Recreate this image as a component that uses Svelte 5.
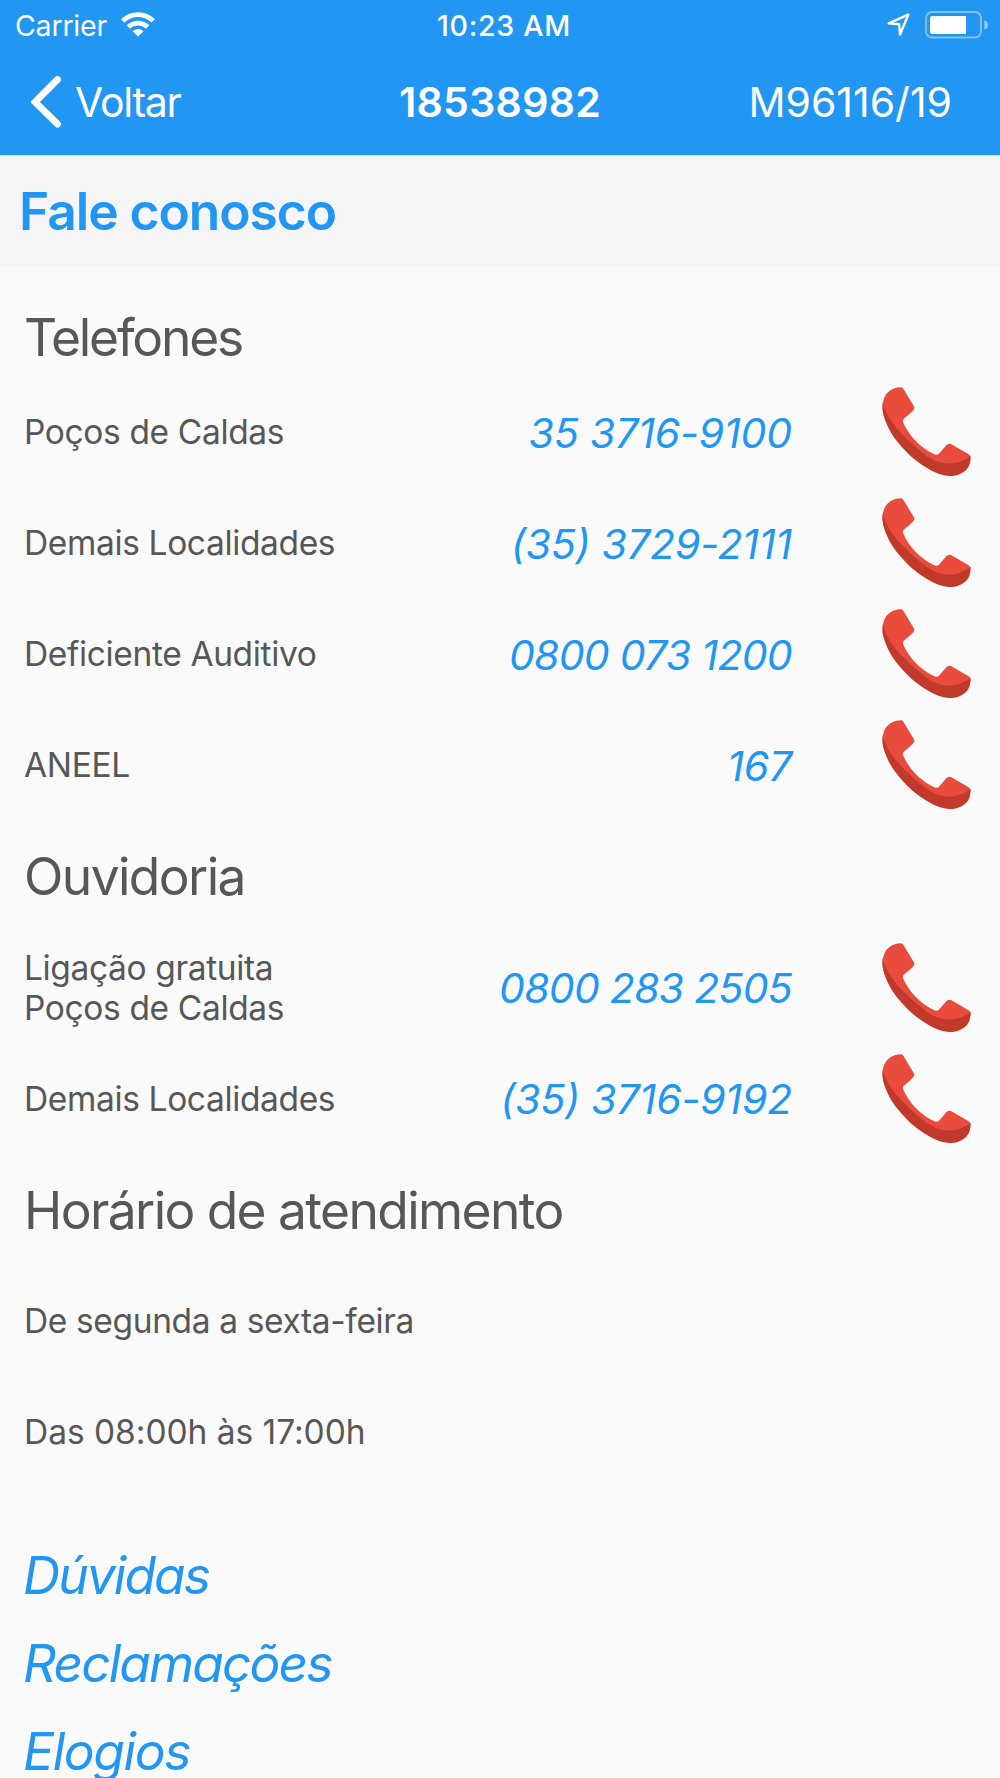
<script>
  const phones = [
    { label: ['Poços de Caldas'], number: '35 3716-9100', wide: true },
    { label: ['Demais Localidades'], number: '(35) 3729-2111', wide: true },
    { label: ['Deficiente Auditivo'], number: '0800 073 1200', wide: false },
    { label: ['ANEEL'], number: '167', wide: true }
  ];
  const ombudsman = [
    { label: ['Ligação gratuita', 'Poços de Caldas'], number: '0800 283 2505', wide: false },
    { label: ['Demais Localidades'], number: '(35) 3716-9192', wide: true }
  ];
  const links = [
    { text: 'Dúvidas' },
    { text: 'Reclamações' },
    { text: 'Elogios', loose: true }
  ];
</script>

{#snippet contact(item)}
  <div class="row">
    <div class="label">
      {#each item.label as line}<div>{line}</div>{/each}
    </div>
    <span class="number" class:wide={item.wide}>{item.number}</span>
    <svg class="phone" viewBox="0 0 90 90" aria-hidden="true">
      <path fill="#e94b3c" d="M8 3.500Q12 0.500 19 0.300Q20.500 0.200 21.500 2L32 19.500Q33 21 31.500 23Q28 27 22 31.500Q20.300 33 21.200 35.500C27 49 39 61.500 53 67.500Q56 68.500 58 65.500L64.500 58Q67 56 69 57L87 67.500Q88.900 69 88.500 70.500Q88 84 78 86C62 88 41 77 29 64C16 54 1 35 0.500 22Q0 9 8 3.500Z"/>
      <path fill="#c1392b" d="M0.700 15.500C4 28 12 39 21 48C29 56 36 62.500 45 69C56 77 72 81 88.500 69Q88.700 77 85 81.500C80 87.500 74 89 68 89C60 89 51.500 85 45 81C38 77 31 71.500 25 65.500C17 57 10 49 6 40Q-0.500 27 0.700 15.500Z"/>
    </svg>
  </div>
{/snippet}

<div class="screen">
  <header>
    <div class="status">
      <div class="side">
        <span class="carrier">Carrier</span>
        <svg class="wifi" viewBox="0 0 34 25" aria-hidden="true">
          <g fill="none" stroke="#fff" stroke-width="4.800">
            <path d="M1.700 8.900A21.800 21.800 0 0 1 32.300 8.900"/>
            <path d="M7.400 15A13.800 13.800 0 0 1 26.600 15"/>
          </g>
          <path fill="#fff" d="M17 24.500L11.500 19.200Q17 14.600 22.500 19.200Z"/>
        </svg>
      </div>
      <span class="time">10:23 AM</span>
      <div class="side end">
        <svg class="arrow" viewBox="0 0 24 24" aria-hidden="true">
          <path fill="none" stroke="#fff" stroke-width="2.400" stroke-linejoin="round" d="M1.700 10.400L21.300 1.700L13 21.500L12.200 11.300Z"/>
        </svg>
        <svg class="battery" viewBox="0 0 64 28" aria-hidden="true">
          <rect x="1" y="1" width="55" height="25.500" rx="6" fill="none" stroke="#fff" stroke-opacity=".42" stroke-width="2"/>
          <rect x="5" y="5" width="36" height="18" rx="2.500" fill="#fff"/>
          <rect x="37" y="5" width="4" height="18" fill="#fff"/>
          <path d="M59.300 9.200Q63 10.500 63 14T59.300 18.800Z" fill="#fff" fill-opacity=".5"/>
        </svg>
      </div>
    </div>
    <nav>
      <div class="side">
        <svg class="chevron" viewBox="0 0 30 52" aria-hidden="true">
          <path d="M26.500 3.500L4 26L26.500 48" fill="none" stroke="#fff" stroke-width="6.800" stroke-linecap="round"/>
        </svg>
        <span class="back">Voltar</span>
      </div>
      <span class="code">18538982</span>
      <div class="side end"><span class="meter">M96116/19</span></div>
    </nav>
  </header>
  <h1><span>Fale conosco</span></h1>
  <main>
    <h2 class="first">Telefones</h2>
    {#each phones as item}{@render contact(item)}{/each}
    <h2>Ouvidoria</h2>
    {#each ombudsman as item}{@render contact(item)}{/each}
    <h2>Horário de atendimento</h2>
    <div class="row"><div class="label">De segunda a sexta-feira</div></div>
    <div class="row"><div class="label hours">Das 08:00h às 17:00h</div></div>
    <div class="links">
      {#each links as link}<div class="link" class:loose={link.loose}>{link.text}</div>{/each}
    </div>
  </main>
</div>

<style>
  :global(body) { margin: 0; background: #fafafa; }
  .screen {
    width: 1000px; height: 1778px; overflow: hidden;
    display: flex; flex-direction: column;
    font-family: Inter, "Liberation Sans", sans-serif;
    color: #575757; background: #fafafa; white-space: nowrap;
  }
  header { flex: none; height: 155px; background: #2196f3; color: #fff; }
  .status, nav { display: grid; grid-template-columns: 1fr auto 1fr; align-items: center; }
  .status { height: 50px; font-size: 28.500px; }
  nav { height: 104px; font-size: 41px; }
  .side { display: flex; align-items: center; }
  .end { justify-content: flex-end; }
  .status .side { padding-left: 15px; }
  .status .end { padding: 0 11px 0 0; }
  nav .side { padding-left: 31px; }
  nav .end { padding: 0 48px 0 0; }
  .carrier { letter-spacing: -.2px; }
  .wifi { width: 34px; height: 25px; margin: -1px 0 0 14px; }
  .time { font-weight: 500; letter-spacing: .75px; padding-left: 8px; }
  .arrow { width: 24px; height: 24px; margin-right: 14px; }
  .battery { width: 64px; height: 28px; margin-top: -1px; }
  .chevron { width: 30px; height: 52px; margin-right: 14px; }
  .back { letter-spacing: -1.300px; }
  .code { font-weight: 600; letter-spacing: .3px; }
  .meter { letter-spacing: 0; }
  h1 {
    flex: none; box-sizing: border-box; height: 111.500px; margin: 0; padding: 0 19px;
    border-top: 1px solid #d8dbde; background: #f5f5f5; color: #2196f3;
    display: flex; align-items: center; font-size: 51.500px; font-weight: 600; letter-spacing: -1.050px;
  }
  main { flex: none; padding: 0 28px 0 24px; }
  h2 {
    margin: 0; height: 111.100px; display: flex; align-items: center;
    font-size: 51.500px; font-weight: 400; letter-spacing: -1.600px;
  }
  h2.first { height: 79px; padding-top: 31px; letter-spacing: -2.200px; }
  .row { height: 111.100px; display: grid; grid-template-columns: 310px 1fr 90px; align-items: center; }
  .label { font-size: 33.500px; line-height: 40px; letter-spacing: -.36px; }
  .hours { letter-spacing: -.03px; }
  .number {
    font-size: 41px; font-style: italic; color: #2196f3; text-align: right;
    padding: 1px 90px 0 0; letter-spacing: -.7px;
  }
  .number.wide { letter-spacing: -.15px; }
  .phone { width: 90px; height: 90px; }
  .links { padding-top: 44px; }
  .link {
    height: 88px; display: flex; align-items: center; margin-left: -1px;
    font-size: 51.500px; font-style: italic; color: #2196f3; letter-spacing: -1.900px;
  }
  .link.loose { letter-spacing: -1.350px; }
</style>
